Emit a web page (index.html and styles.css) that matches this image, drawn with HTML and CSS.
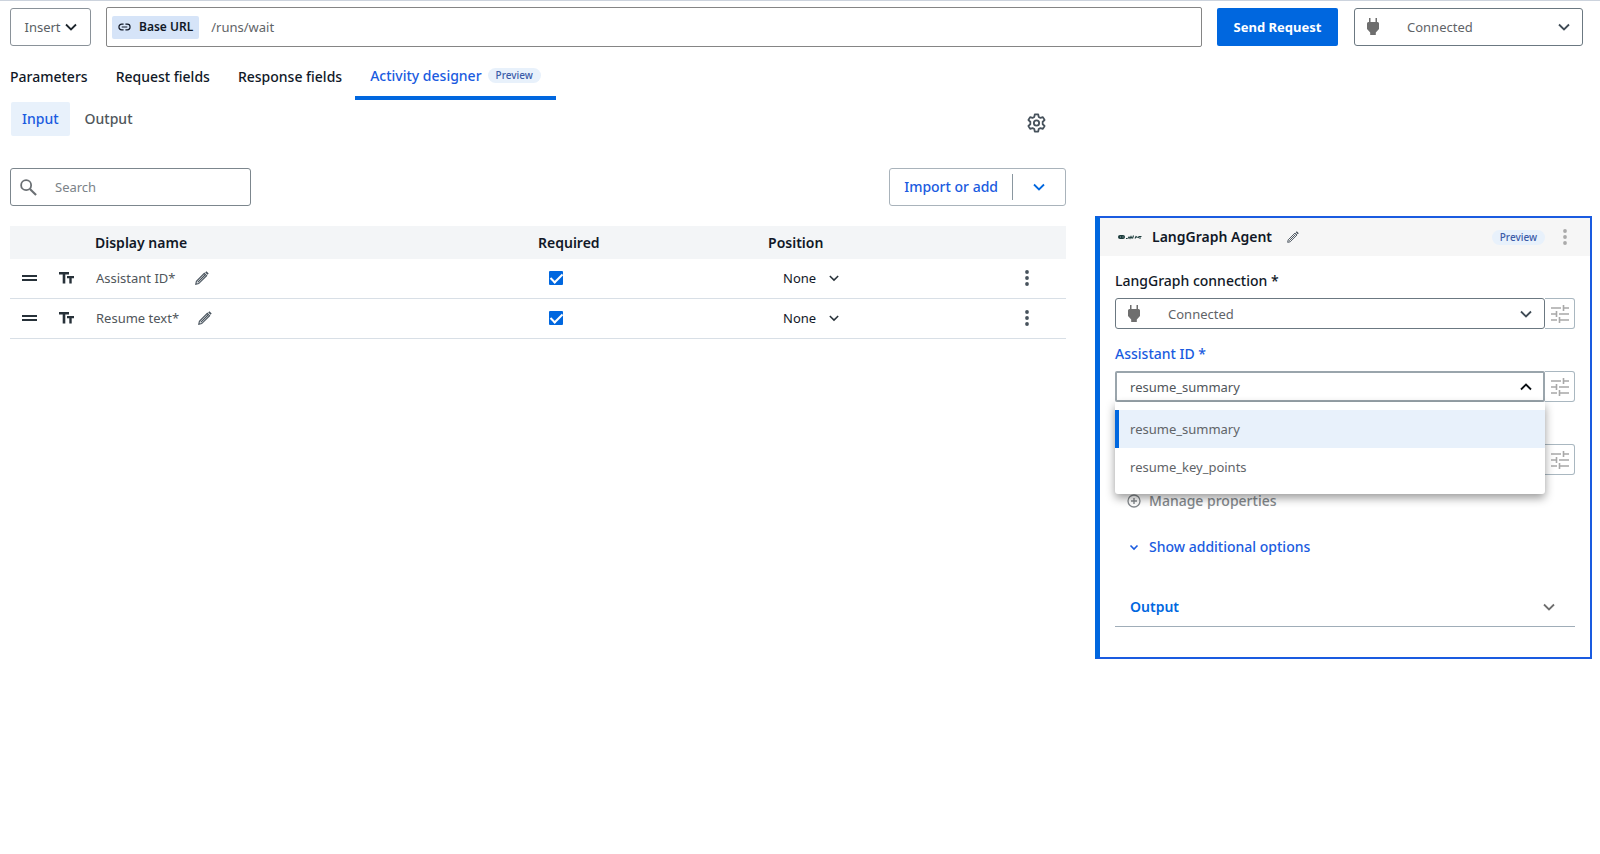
FILE: index.html
```html
<!DOCTYPE html>
<html lang="en">
  <head>
    <meta charset="UTF-8" />
    <meta name="viewport" content="width=device-width, initial-scale=1.0" />
    <title>Activity designer</title>
    <link rel="stylesheet" href="styles.css" />
  </head>
  <body>
    <!-- Shared icons -->
    <svg class="icon-defs" aria-hidden="true">
      <symbol id="chevron" viewBox="0 0 12 12">
        <path d="M1 3.500 6 8.500 11 3.500" fill="none" stroke="currentColor" stroke-width="1.800" />
      </symbol>
      <symbol id="plug" viewBox="0 0 12 18">
        <path d="M2 0h1.500v4h5V0H10v4h.5A1.500 1.500 0 0 1 12 5.500V11l-3.200 3.600V17H3.200v-2.400L0 11V5.500A1.500 1.500 0 0 1 1.500 4H2z" fill="currentColor" />
      </symbol>
      <symbol id="pencil" viewBox="0 0 14 14">
        <path d="M.8 13.200l.6-2.900L9.300 2.400l2.300 2.300-7.900 7.900zM2.700 11.300 10 4" fill="none" stroke="currentColor" stroke-width="1.100" />
        <path d="M10.200 1.500 11.400.3l2.300 2.300-1.200 1.200z" fill="currentColor" />
      </symbol>
      <symbol id="text-type" viewBox="0 0 15 12">
        <path d="M0 0h10v2.500H6.300V11.500H3.700V2.500H0zM8 4h7v2.200h-2.300v5.300h-2.400V6.200H8z" fill="currentColor" />
      </symbol>
      <symbol id="dots" viewBox="0 0 4 16">
        <circle cx="2" cy="2" r="1.900" fill="currentColor" />
        <circle cx="2" cy="8" r="1.900" fill="currentColor" />
        <circle cx="2" cy="14" r="1.900" fill="currentColor" />
      </symbol>
      <symbol id="tune" viewBox="0 0 18 18">
        <path d="M0 3h10M12 3h6M12.500 0v6M0 9h5M8 9h10M5.500 6v6M0 15h6M8.500 15H18M8.500 12v6" fill="none" stroke="currentColor" stroke-width="1.600" />
      </symbol>
    </svg>

    <header class="topbar">
      <button type="button" class="insert-btn">
        Insert
        <svg class="chevron"><use href="#chevron" /></svg>
      </button>
      <div class="url-box">
        <span class="base-url">
          <svg viewBox="0 0 14 8">
            <path d="M6 1H4a3 3 0 0 0 0 6h2M8 1h2a3 3 0 0 1 0 6H8M4 4h6" fill="none" stroke="currentColor" stroke-width="1.300" />
          </svg>
          Base URL
        </span>
        <input type="text" value="/runs/wait" aria-label="Base URL" />
      </div>
      <button type="button" class="send-btn">Send Request</button>
      <div class="select-box top-connection">
        <svg class="plug"><use href="#plug" /></svg>
        <select aria-label="Connected">
          <option>Connected</option>
        </select>
        <svg class="chevron"><use href="#chevron" /></svg>
      </div>
    </header>

    <nav class="tabs">
      <a href="#">Parameters</a>
      <a href="#">Request fields</a>
      <a href="#">Response fields</a>
      <a href="#" class="active">Activity designer <span class="pill">Preview</span></a>
    </nav>

    <main class="content">
      <section class="designer">
        <div class="sub-tabs">
          <button type="button" class="active">Input</button>
          <button type="button">Output</button>
          <button type="button" class="settings" aria-label="Settings">
            <svg viewBox="0 0 20 20">
              <path d="M8.200 1h3.600l.5 2.600 1.900 1.100 2.500-.9 1.800 3.100-2 1.800v2.600l2 1.800-1.800 3.100-2.500-.9-1.900 1.100-.5 2.600H8.200l-.5-2.600-1.900-1.100-2.500.9-1.800-3.100 2-1.800V8.700l-2-1.800 1.800-3.100 2.500.9 1.900-1.100z" fill="none" stroke="currentColor" stroke-width="1.900" stroke-linejoin="round" />
              <circle cx="10" cy="10" r="2.800" fill="none" stroke="currentColor" stroke-width="1.900" />
            </svg>
          </button>
        </div>

        <div class="toolbar">
          <div class="search">
            <svg viewBox="0 0 18 18">
              <circle cx="6.500" cy="6.500" r="5.300" fill="none" stroke="currentColor" stroke-width="1.900" />
              <path d="M10.500 10.500l6.500 6.500" stroke="currentColor" stroke-width="2.200" />
            </svg>
            <input type="text" placeholder="Search" aria-label="Search" />
          </div>
          <div class="split-btn">
            <button type="button">Import or add</button>
            <button type="button" class="split-toggle" aria-label="Import or add">
              <svg class="chevron"><use href="#chevron" /></svg>
            </button>
          </div>
        </div>

        <table class="fields">
          <colgroup>
            <col class="col-name" />
            <col class="col-required" />
            <col class="col-position" />
            <col />
          </colgroup>
          <thead>
            <tr>
              <th class="name-head">Display name</th>
              <th>Required</th>
              <th>Position</th>
              <th></th>
            </tr>
          </thead>
          <tbody>
            <tr>
              <td>
                <div class="name-cell">
                  <span class="drag"></span>
                  <svg class="type"><use href="#text-type" /></svg>
                  <span>Assistant ID*</span>
                  <svg class="pencil"><use href="#pencil" /></svg>
                </div>
              </td>
              <td class="required-cell"><input type="checkbox" aria-label="Required" checked /></td>
              <td>
                <div class="position-cell">
                  <select aria-label="Position">
                    <option>None</option>
                  </select>
                  <svg class="chevron small"><use href="#chevron" /></svg>
                </div>
              </td>
              <td class="menu-cell"><svg class="dots"><use href="#dots" /></svg></td>
            </tr>
            <tr>
              <td>
                <div class="name-cell">
                  <span class="drag"></span>
                  <svg class="type"><use href="#text-type" /></svg>
                  <span>Resume text*</span>
                  <svg class="pencil"><use href="#pencil" /></svg>
                </div>
              </td>
              <td class="required-cell"><input type="checkbox" aria-label="Required" checked /></td>
              <td>
                <div class="position-cell">
                  <select aria-label="Position">
                    <option>None</option>
                  </select>
                  <svg class="chevron small"><use href="#chevron" /></svg>
                </div>
              </td>
              <td class="menu-cell"><svg class="dots"><use href="#dots" /></svg></td>
            </tr>
          </tbody>
        </table>
      </section>

      <aside class="panel">
        <div class="panel-header">
          <svg class="logo" viewBox="0 0 24 6">
            <rect x="0" y="1" width="7" height="4" rx="2" fill="#1c3c3c" />
            <path d="M2 3h1M4.500 3h1" stroke="#9fb0b0" stroke-width="1" />
            <path d="M8 4.500h1.500M10 4.500l1-1.500 1 1.500 1-2 1 2M14.500 4.500l1-3M17 4.500l1-2 1.500 1M20 4l1-1.500h2.500M21 4h2" fill="none" stroke="#1c3c3c" stroke-width="1.100" />
          </svg>
          <h2>LangGraph Agent</h2>
          <svg class="pencil"><use href="#pencil" /></svg>
          <span class="pill">Preview</span>
          <svg class="dots"><use href="#dots" /></svg>
        </div>

        <div class="panel-body">
          <label for="connection">LangGraph connection *</label>
          <div class="field-row">
            <div class="select-box">
              <svg class="plug"><use href="#plug" /></svg>
              <select id="connection">
                <option>Connected</option>
              </select>
              <svg class="chevron"><use href="#chevron" /></svg>
            </div>
            <button type="button" class="tune-btn" aria-label="LangGraph connection">
              <svg><use href="#tune" /></svg>
            </button>
          </div>

          <label for="assistant" class="focused">Assistant ID *</label>
          <div class="field-row">
            <div class="select-box open">
              <select id="assistant">
                <option>resume_summary</option>
                <option>resume_key_points</option>
              </select>
              <svg class="chevron up"><use href="#chevron" /></svg>
            </div>
            <button type="button" class="tune-btn" aria-label="Assistant ID">
              <svg><use href="#tune" /></svg>
            </button>
            <ul class="options">
              <li class="selected">resume_summary</li>
              <li>resume_key_points</li>
            </ul>
          </div>

          <div class="field-row covered">
            <div class="select-box">
              <input type="text" aria-label="Resume text" />
            </div>
            <button type="button" class="tune-btn" aria-label="Resume text">
              <svg><use href="#tune" /></svg>
            </button>
          </div>

          <button type="button" class="link-btn manage" disabled>
            <svg viewBox="0 0 14 14">
              <circle cx="7" cy="7" r="6" fill="none" stroke="currentColor" stroke-width="1.300" />
              <path d="M7 4v6M4 7h6" stroke="currentColor" stroke-width="1.400" />
            </svg>
            Manage properties
          </button>
          <button type="button" class="link-btn additional">
            <svg viewBox="0 0 14 14">
              <path d="M3.500 5.500 7 9l3.500-3.500" fill="none" stroke="currentColor" stroke-width="1.600" />
            </svg>
            Show additional options
          </button>
          <button type="button" class="output-btn">
            Output
            <svg class="chevron"><use href="#chevron" /></svg>
          </button>
        </div>
      </aside>
    </main>
  </body>
</html>
```
FILE: styles.css
```css
* {
  margin: 0;
  padding: 0;
  box-sizing: border-box;
}

body {
  background: #fff;
  border-top: 1px solid #ccd3dd;
  color: #111827;
  font-family: "Noto Sans", sans-serif;
  font-size: 13px;
  line-height: 20px;
}

button,
input,
select {
  font: inherit;
  color: inherit;
  background: none;
  border: none;
  outline: none;
}

button {
  cursor: pointer;
}

select {
  appearance: none;
  flex: 1;
  min-width: 0;
}

svg {
  display: block;
  flex: none;
}

.icon-defs {
  position: absolute;
  width: 0;
  height: 0;
}

.chevron {
  width: 12px;
  height: 12px;
  color: #3f4b55;
}

.chevron.small {
  width: 10px;
  height: 10px;
  color: #273139;
}

.chevron.up {
  transform: rotate(180deg);
  color: #0b0f14;
}

.plug {
  width: 12px;
  height: 18px;
  color: #6e6e6e;
}

.pencil {
  width: 14px;
  height: 14px;
  color: #47525c;
}

.dots {
  width: 4px;
  height: 16px;
  color: #47525c;
}

.pill {
  padding: 0 8px;
  border-radius: 8px;
  background: #e8f1fb;
  color: #3a5ba8;
  font-size: 10px;
  font-weight: 500;
  line-height: 15px;
}

/* Top bar */
.topbar {
  display: flex;
  align-items: center;
  padding: 6px 17px 0 10px;
}

.insert-btn {
  display: flex;
  align-items: center;
  justify-content: center;
  gap: 4px;
  width: 81px;
  height: 38px;
  border: 1px solid #8a9299;
  border-radius: 3px;
  color: #5a5f64;
}

.insert-btn .chevron {
  color: #1d252c;
}

.url-box {
  display: flex;
  align-items: center;
  flex: 1;
  gap: 12px;
  height: 40px;
  margin: 0 15px;
  padding: 0 5px;
  border: 1px solid #858585;
  border-radius: 2px;
}

.url-box input {
  flex: 1;
  color: #5f6468;
}

.base-url {
  display: flex;
  align-items: center;
  gap: 8px;
  height: 23px;
  padding: 0 6px;
  border-radius: 2px;
  background: #d6e4f8;
  font-size: 12px;
  font-weight: 600;
}

.base-url svg {
  width: 13px;
  height: 8px;
}

.send-btn {
  width: 121px;
  height: 38px;
  border-radius: 2px;
  background: #0067df;
  color: #fff;
  font-weight: 700;
}

.select-box {
  display: flex;
  align-items: center;
  flex: 1;
  border: 1px solid #6b7881;
  border-radius: 3px;
  color: #5f6468;
}

.top-connection {
  flex: none;
  width: 229px;
  height: 38px;
  margin-left: 16px;
  padding: 0 12px;
}

.select-box .plug {
  margin-right: 28px;
}

/* Tabs */
.tabs {
  display: flex;
  height: 53px;
  padding: 0 10px;
  font-size: 14px;
}

.tabs a {
  display: flex;
  align-items: center;
  padding-top: 10px;
  margin-right: 28px;
  border-bottom: 4px solid transparent;
  color: #111827;
  font-weight: 500;
  text-decoration: none;
}

.tabs a.active {
  gap: 6px;
  margin-left: -15px;
  padding: 8px 15px 0;
  border-bottom-color: #0067df;
  color: #1a5be0;
}

/* Main layout */
.content {
  display: grid;
  grid-template-columns: 68fr 32fr;
  gap: 29px;
  align-items: start;
  padding: 0 8px 0 10px;
}

.sub-tabs {
  display: flex;
  align-items: center;
  gap: 4px;
  padding: 2px 20px 0 1px;
}

.sub-tabs button {
  height: 34px;
  padding: 0 11px;
  border-radius: 2px;
  color: #50565b;
  font-size: 14px;
  font-weight: 500;
}

.sub-tabs .active {
  background: #e8f1fb;
  color: #1a5be0;
}

.sub-tabs .settings {
  margin: 8px 0 0 auto;
  padding: 0;
  height: 20px;
  color: #47525c;
}

.settings svg {
  width: 19px;
  height: 20px;
}

.toolbar {
  display: flex;
  justify-content: space-between;
  margin-top: 32px;
}

.search {
  display: flex;
  align-items: center;
  gap: 18px;
  width: 241px;
  height: 38px;
  padding: 0 9px;
  border: 1px solid #7c868d;
  border-radius: 3px;
}

.search svg {
  width: 17px;
  height: 17px;
  color: #6a6f73;
}

.search input {
  flex: 1;
  min-width: 0;
}

.search input::placeholder {
  color: #7b8288;
}

.split-btn {
  display: flex;
  align-items: center;
  height: 38px;
  border: 1px solid #a9b3bb;
  border-radius: 3px;
  color: #1a5be0;
  font-size: 14px;
  font-weight: 500;
}

.split-btn button {
  height: 26px;
  padding: 0 14px;
}

.split-btn .split-toggle {
  padding: 0 20px;
  border-left: 1px solid #8a97a0;
}

.split-btn .chevron {
  color: #0067df;
}

/* Fields table */
.fields {
  width: 100%;
  margin-top: 20px;
  border-collapse: separate;
  border-spacing: 0;
  table-layout: fixed;
}

.col-name {
  width: 50%;
}

.col-required {
  width: 230px;
}

.col-position {
  width: 168px;
}

.fields th {
  height: 33px;
  background: #f3f5f7;
  font-size: 14px;
  font-weight: 600;
  text-align: left;
}

.fields .name-head {
  padding-left: 85px;
}

.fields td {
  height: 40px;
  padding-bottom: 2px;
  border-bottom: 1px solid #d8dfe6;
}

.name-cell {
  display: flex;
  align-items: center;
  padding-left: 12px;
  color: #50565b;
}

.drag {
  width: 15px;
  height: 6px;
  margin-right: 22px;
  border: solid #273139;
  border-width: 2px 0;
}

.type {
  width: 15px;
  height: 12px;
  margin-right: 22px;
  color: #273139;
}

.name-cell .pencil {
  margin-left: 19px;
}

.required-cell {
  padding-left: 11px;
}

.required-cell input {
  display: flex;
  justify-content: center;
  appearance: none;
  width: 14px;
  height: 14px;
  border-radius: 1px;
}

.required-cell input:checked {
  background: #0067df;
}

.required-cell input:checked::before {
  content: "";
  width: 5px;
  height: 10px;
  border: solid #fff;
  border-width: 0 2px 2px 0;
  transform: rotate(45deg);
}

.position-cell {
  display: flex;
  align-items: center;
  gap: 12px;
  padding-left: 15px;
}

.position-cell select {
  flex: none;
}

.menu-cell .dots {
  margin: 0 37px 0 auto;
}

/* Agent panel */
.panel {
  margin-top: 116px;
  border: 2px solid #1a5be0;
  border-left: 5px solid #0067df;
}

.panel-header {
  display: flex;
  align-items: center;
  height: 38px;
  padding: 0 23px 0 18px;
  background: #f6f6f6;
}

.logo {
  width: 24px;
  height: 6px;
}

.panel-header h2 {
  margin: 0 15px 0 10px;
  font-size: 14px;
  font-weight: 600;
}

.panel-header .pencil {
  width: 12px;
  height: 12px;
}

.panel-header .pill {
  margin: 0 18px 0 auto;
}

.panel-header .dots {
  color: #aaa;
}

.panel-body {
  padding: 15px 15px 30px;
}

.panel-body label {
  display: block;
  margin-bottom: 7px;
  font-size: 14px;
  font-weight: 500;
}

.panel-body .focused {
  color: #1a5be0;
}

.field-row {
  display: flex;
  position: relative;
  height: 31px;
  margin-bottom: 15px;
}

.field-row .select-box {
  padding: 0 12px;
}

.field-row .open {
  padding: 0 11px 0 13px;
  border: 2px solid #9aa5ac;
  border-radius: 2px;
}

.field-row .open select {
  color: #50565b;
}

.tune-btn {
  display: flex;
  align-items: center;
  justify-content: center;
  width: 30px;
  border: 1px solid #a9b7c0;
  border-left: none;
  border-radius: 0 3px 3px 0;
  color: #a8a8a8;
}

.tune-btn svg {
  width: 18px;
  height: 18px;
}

.options {
  position: absolute;
  top: 100%;
  left: 0;
  right: 30px;
  z-index: 1;
  padding: 8px 0;
  border-radius: 0 0 3px 3px;
  background: #fff;
  box-shadow: 0 4px 10px rgba(0, 0, 0, 0.4);
  color: #5f6468;
  list-style: none;
}

.options li {
  padding: 9px 15px;
}

.options .selected {
  padding-left: 11px;
  border-left: 4px solid #0067df;
  background: #e8f1fb;
}

.covered {
  margin-top: 42px;
}

.link-btn {
  display: flex;
  align-items: center;
  gap: 8px;
  margin-left: 12px;
  color: #1a5be0;
  font-size: 14px;
  font-weight: 500;
}

.link-btn svg {
  width: 14px;
  height: 14px;
}

.manage {
  margin-top: 16px;
  color: #84898d;
}

.additional {
  margin-top: 26px;
}

.output-btn {
  display: flex;
  align-items: center;
  justify-content: space-between;
  width: 100%;
  height: 40px;
  margin-top: 30px;
  padding: 0 20px 0 15px;
  border-bottom: 1px solid #a0adb8;
  color: #0067df;
  font-size: 14px;
  font-weight: 600;
}

.output-btn .chevron {
  color: #6e6e6e;
}
```
